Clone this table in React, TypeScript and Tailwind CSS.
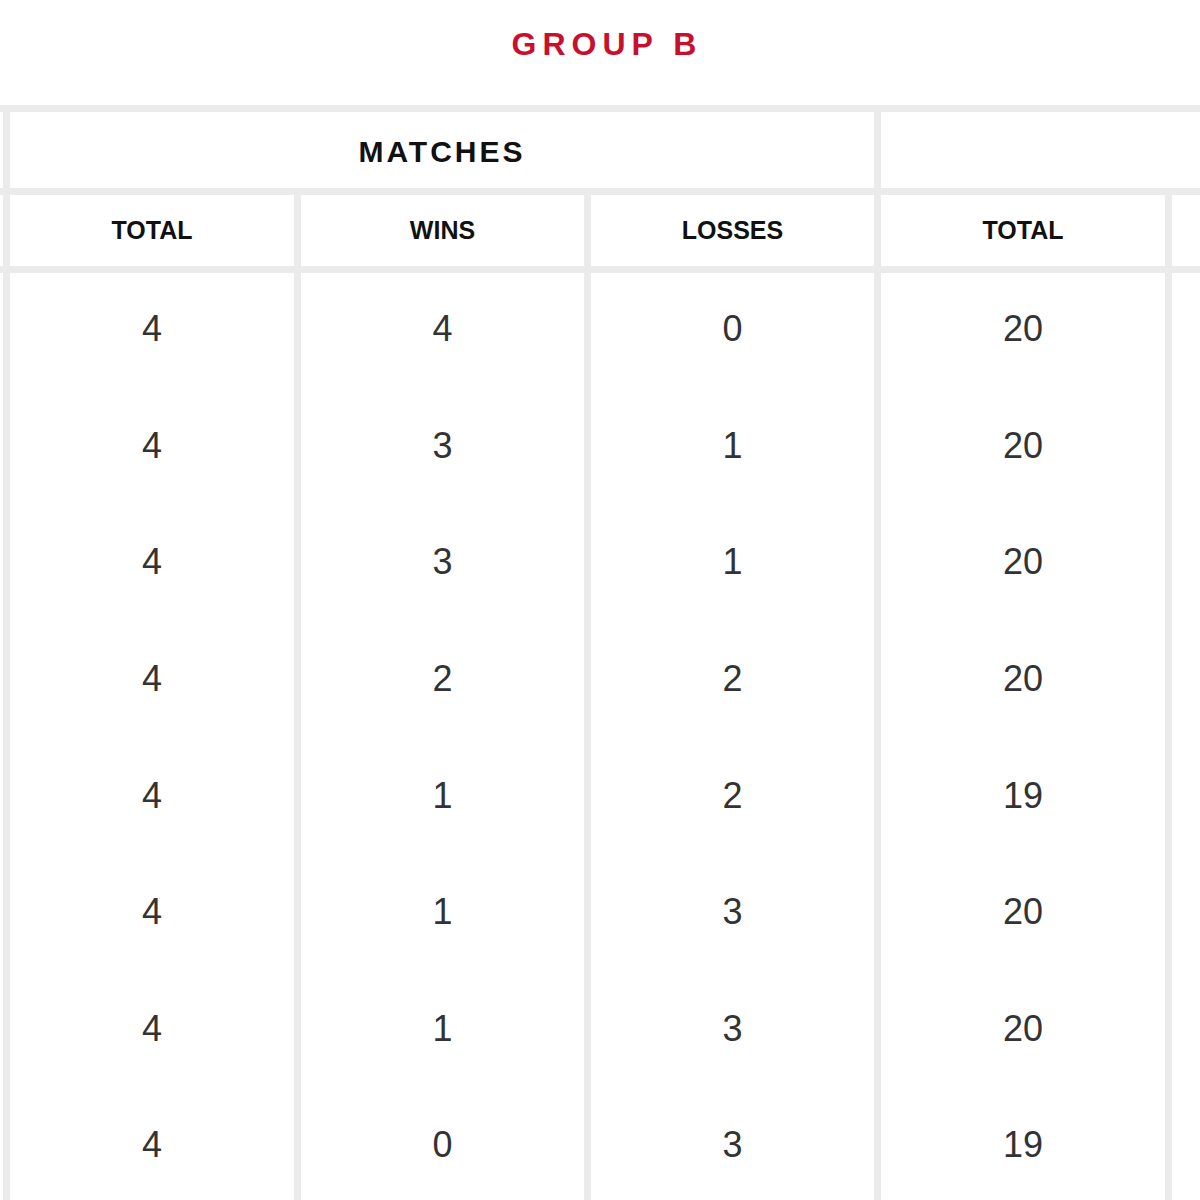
import React from "react";

const rows: string[][] = [
  ["4", "4", "0", "20"],
  ["4", "3", "1", "20"],
  ["4", "3", "1", "20"],
  ["4", "2", "2", "20"],
  ["4", "1", "2", "19"],
  ["4", "1", "3", "20"],
  ["4", "1", "3", "20"],
  ["4", "0", "3", "19"],
];

const grid = "grid grid-cols-[291px_290px_290px_291px_300px] ml-[3px]";
const cell = "border-l-[7px] border-[#ebebeb] flex items-center justify-center";

export default function App() {
  return (
    <div
      className="w-[1200px] h-[1200px] overflow-hidden bg-white"
      style={{ fontFamily: '"Liberation Sans", Arial, sans-serif' }}
    >
      <div className="h-[105px] flex justify-center pt-[28px] pl-[14px]">
        <span className="text-[32px] leading-[32px] font-bold tracking-[6px] text-[#c8102e]">
          GROUP B
        </span>
      </div>
      <div className="border-t-[7px] border-[#ebebeb]">
        <div className={`${grid} h-[76px]`}>
          <div className={`${cell} col-span-3 pt-[2px]`}>
            <span className="text-[30px] font-bold tracking-[3px] text-[#111]">MATCHES</span>
          </div>
          <div className={`${cell} col-span-2`} />
        </div>
      </div>
      <div className="border-t-[7px] border-[#ebebeb]">
        <div className={`${grid} h-[71px]`}>
          {["TOTAL", "WINS", "LOSSES", "TOTAL"].map((t, i) => (
            <div key={i} className={cell}>
              <span className="text-[25px] font-bold text-[#111]">{t}</span>
            </div>
          ))}
          <div className={cell} />
        </div>
      </div>
      <div className="border-t-[7px] border-[#ebebeb]">
        {rows.map((r, ri) => (
          <div key={ri} className={`${grid} h-[116.6px]`}>
            {r.map((v, ci) => (
              <div key={ci} className={`${cell} pb-[4px]`}>
                <span className="text-[36px] text-[#333]">{v}</span>
              </div>
            ))}
            <div className={cell} />
          </div>
        ))}
      </div>
    </div>
  );
}
